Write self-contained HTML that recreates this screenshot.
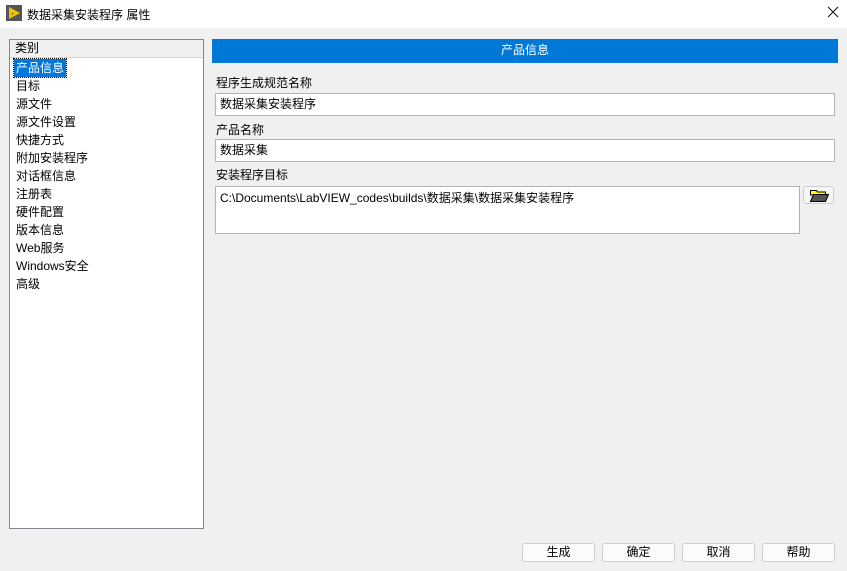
<!DOCTYPE html>
<html><head><meta charset="utf-8"><style>
*{box-sizing:border-box;margin:0;padding:0}
body{width:847px;height:571px;background:#f0f0f0;font-family:"Liberation Sans","Noto Sans CJK SC",sans-serif;font-size:12px;color:#000;position:relative;overflow:hidden}
.a{position:absolute}
.title{left:0;top:0;width:847px;height:28px;background:#fff}
.list{left:9px;top:39px;width:195px;height:490px;background:#fff;border:1px solid #828790}
.hdr{left:0;top:0;width:193px;height:18px;background:#f0f0f0;border-bottom:1px solid #d5d5d5;padding-left:5px;line-height:17px}
.it{left:6px;height:18px;line-height:18px;white-space:nowrap}
.in{background:#fff;border:1px solid #b4b4b4;padding-left:4px;line-height:20px}
.btn{top:543px;width:73px;height:19px;border:1px solid #cfcfcf;border-radius:3px;background:#fbfbfb;text-align:center;line-height:17px}
</style></head><body>
<div class="a title">
 <svg class="a" style="left:6px;top:5px" width="16" height="16"><rect width="16" height="16" fill="#555"/><polygon points="3,2 14,8 3,14" fill="#f5c400"/><text x="5" y="11" font-size="6" fill="#555">+</text></svg>
 <div class="a" style="left:27px;top:6px;font-size:12px">数据采集安装程序 属性</div>
 <svg class="a" style="left:827px;top:6px" width="12" height="12"><path d="M1 1L11 11M11 1L1 11" stroke="#222" stroke-width="1.2"/></svg>
</div>
<div class="a list">
 <div class="a hdr">类别</div>
 <div class="a it" style="top:19px;left:4px;background:#0078d7;color:#fff;padding:0 2px;outline:1px dotted #000">产品信息</div>
 <div class="a it" style="top:37px">目标</div>
 <div class="a it" style="top:55px">源文件</div>
 <div class="a it" style="top:73px">源文件设置</div>
 <div class="a it" style="top:91px">快捷方式</div>
 <div class="a it" style="top:109px">附加安装程序</div>
 <div class="a it" style="top:127px">对话框信息</div>
 <div class="a it" style="top:145px">注册表</div>
 <div class="a it" style="top:163px">硬件配置</div>
 <div class="a it" style="top:181px">版本信息</div>
 <div class="a it" style="top:199px">Web服务</div>
 <div class="a it" style="top:217px">Windows安全</div>
 <div class="a it" style="top:235px">高级</div>
</div>
<div class="a" style="left:212px;top:39px;width:626px;height:24px;background:#0078d7;color:#fff;text-align:center;line-height:22px">产品信息</div>
<div class="a" style="left:216px;top:74px">程序生成规范名称</div>
<div class="a in" style="left:215px;top:93px;width:620px;height:23px">数据采集安装程序</div>
<div class="a" style="left:216px;top:121px">产品名称</div>
<div class="a in" style="left:215px;top:139px;width:620px;height:23px">数据采集</div>
<div class="a" style="left:216px;top:166px">安装程序目标</div>
<div class="a in" style="left:215px;top:186px;width:585px;height:48px;line-height:22px">C:\Documents\LabVIEW_codes\builds\数据采集\数据采集安装程序</div>
<div class="a" style="left:803px;top:186px;width:31px;height:18px;border:1px solid #ccc;border-radius:3px;background:#f6f6f6">
 <svg class="a" style="left:6px;top:2px" width="19" height="13"><path d="M0.5 1.5h6l1 1.5h8v3H0.5z" fill="#ff0" stroke="#000" stroke-width="1"/><path d="M0.5 12.5l3-7h15l-3 7z" fill="#555" stroke="#000" stroke-width="1"/></svg>
</div>
<div class="a btn" style="left:522px">生成</div>
<div class="a btn" style="left:602px">确定</div>
<div class="a btn" style="left:682px">取消</div>
<div class="a btn" style="left:762px">帮助</div>
</body></html>
